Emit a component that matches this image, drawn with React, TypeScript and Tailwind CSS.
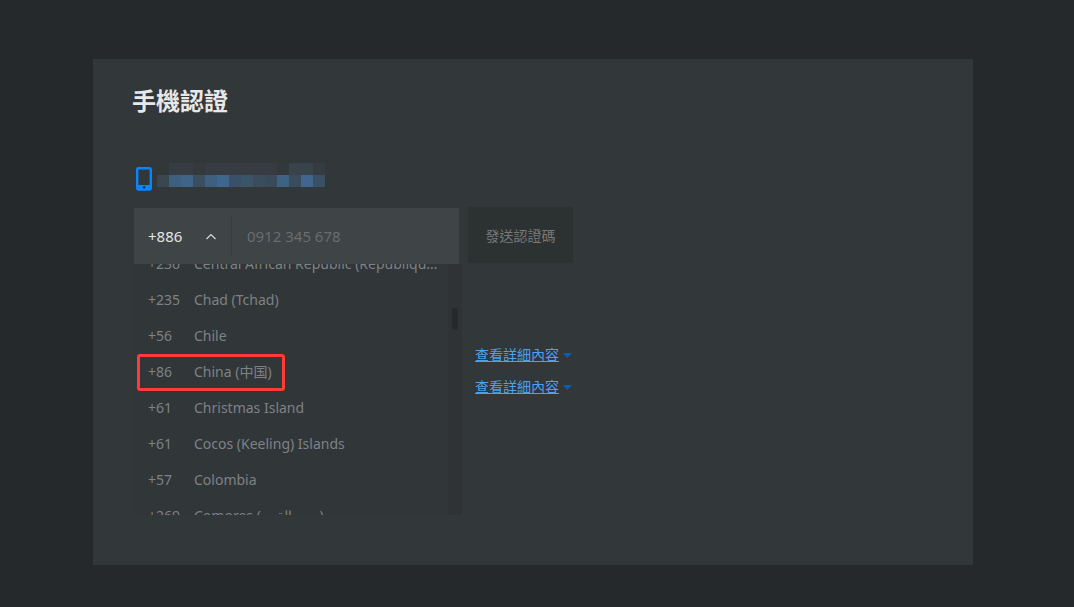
const countries = [
  { code: '+236', name: 'Central African Republic (République centrafricaine)' },
  { code: '+235', name: 'Chad (Tchad)' },
  { code: '+56', name: 'Chile' },
  { code: '+86', name: 'China (中国)', marked: true },
  { code: '+61', name: 'Christmas Island' },
  { code: '+61', name: 'Cocos (Keeling) Islands' },
  { code: '+57', name: 'Colombia' },
  { code: '+269', name: 'Comores (جزر القمر)' },
];

// pixelated phone number
const topCells = [
  'bg-[#363c41]', 'bg-[#363c41]', 'bg-[#33393d]', 'bg-[#363c41]', 'bg-[#363c41]', 'bg-[#363c41]',
  'bg-[#363c41]', 'bg-[#363c41]', 'bg-[#363c41]', 'bg-[#32383c]', 'bg-[#39434b]', 'bg-[#39434b]',
  'bg-[#353b40]',
];
const bottomCells = [
  'bg-[#3a4650]', 'bg-[#3e5f80]', 'bg-[#3f6488]', 'bg-[#3a4e60]', 'bg-[#3e5f80]', 'bg-[#3f668c]',
  'bg-[#3a5068]', 'bg-[#3b5468]', 'bg-[#3a4c5e]', 'bg-[#3a4a5a]', 'bg-[#3e6284]', 'bg-[#3a4c5c]',
  'bg-[#40668e]', 'bg-[#3a5064]',
];

function PhoneIcon() {
  return (
    <svg width="16" height="24" viewBox="0 0 16 24" className="shrink-0">
      <rect x="1.2" y="1.2" width="13.6" height="21.3" rx="1.2" fill="none" stroke="#0a84ff" strokeWidth="2.4" />
      <rect x="1" y="18" width="14" height="4.5" fill="#0a84ff" />
      <circle cx="8" cy="20.2" r="1.3" fill="#22303c" />
    </svg>
  );
}

function DetailLink() {
  return (
    <a className="flex items-center gap-[4px] text-[14px] leading-[20px] text-[#4aa3ee] cursor-pointer">
      <span className="underline">查看詳細內容</span>
      <svg width="9" height="5" viewBox="0 0 9 5">
        <path d="M0 0h9L4.5 5z" fill="#0a5fb4" />
      </svg>
    </a>
  );
}

export default function App() {
  return (
    <div
      className="h-[607px] w-[1074px] overflow-hidden bg-[#25292c] pt-[59px] pl-[93px]"
      style={{ fontFamily: '"Noto Sans", "Noto Sans CJK TC", sans-serif' }}
    >
      <section className="h-[506px] w-[880px] bg-[#32373a] pl-[40px]">
        <h1 className="-ml-px pt-[24px] text-[24px] leading-[35px] font-bold text-[#e8e8e8]">手機認證</h1>

        {/* phone row */}
        <div className="mt-[49px] flex items-start pl-[3px]">
          <PhoneIcon />
          <div className="ml-[5px] -mt-[4px]">
            <div className="flex pl-[12px]">
              {topCells.map((c, i) => (
                <div key={i} className={`h-3 w-3 ${c}`} />
              ))}
            </div>
            <div className="flex">
              {bottomCells.map((c, i) => (
                <div key={i} className={`h-3 w-3 ${c}`} />
              ))}
            </div>
          </div>
        </div>

        <div className="mt-[17px] flex items-start pl-px">
          {/* phone input + country list */}
          <div className="w-[325px]">
            <div className="flex h-[56px] items-center bg-[#3f4447]">
              <span className="w-[56px] pl-[14px] text-[15px] text-[#e4e4e4]">+886</span>
              <svg width="12" height="7" viewBox="0 0 12 7" className="ml-[15px]">
                <path d="M1.5 6 6 1.5 10.5 6" fill="none" stroke="#d8d8d8" strokeWidth="1.2" />
              </svg>
              <div className="ml-[14px] h-[40px] w-px bg-[#393e41]" />
              <span className="ml-[15px] text-[15px] text-[#696d70]">0912 345 678</span>
            </div>
            <div className="relative h-[251px] w-[328px] overflow-hidden bg-[#313639]">
              <div className="-mt-[18px]">
                {countries.map((c) => (
                  <div key={c.code + c.name} className="relative flex h-[36px] items-center pb-[2px] pl-[14px] text-[14px] text-[#7e8285]">
                    <span className="w-[46px]">{c.code}</span>
                    <span className="w-[244px] truncate">{c.name}</span>
                    {c.marked && (
                      <div className="absolute top-0 left-[3px] h-[37px] w-[148px] rounded-[3px] border-[3px] border-[#ff3b3b]" />
                    )}
                  </div>
                ))}
              </div>
              {/* scrollbar */}
              <div className="absolute top-0 right-0 h-full w-[14px] bg-[#2f3336]">
                <div className="absolute top-[44px] left-[4px] h-[22px] w-[6px] rounded-full bg-[#26292c]" />
              </div>
            </div>
          </div>

          {/* send button + links */}
          <div className="ml-[9px] -mt-px">
            <button className="h-[56px] w-[105px] bg-[#2c3131] text-[14px] text-[#77797a]">發送認證碼</button>
            <div className="mt-[82px] flex flex-col gap-[12px] pl-[7px]">
              <DetailLink />
              <DetailLink />
            </div>
          </div>
        </div>
      </section>
    </div>
  );
}
